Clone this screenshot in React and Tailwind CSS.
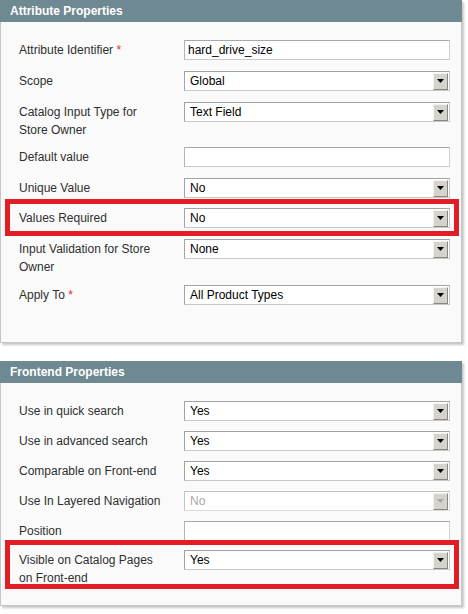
import React from "react";

function Arrow({ disabled }) {
  return (
    <div className="flex items-center justify-center w-[15px] h-[17px] mr-[1px] bg-[#d6d3cc] border border-t-[#f4f3ef] border-l-[#f4f3ef] border-r-[#8a8780] border-b-[#8a8780]">
      <svg width="7" height="4" viewBox="0 0 7 4">
        <path d="M0 0 H7 L3.5 4 Z" fill={disabled ? "#a8a8a8" : "#000"} />
      </svg>
    </div>
  );
}

function Select({ value, disabled }) {
  return (
    <div
      className={
        disabled
          ? "flex items-center w-[266px] h-[20px] bg-white border border-t-[#c4c4c4] border-l-[#c4c4c4] border-r-[#dcdcdc] border-b-[#dcdcdc]"
          : "flex items-center w-[266px] h-[20px] bg-white border border-t-[#a3a3a3] border-l-[#a3a3a3] border-r-[#c8c8c8] border-b-[#c8c8c8]"
      }
    >
      <div
        className={
          disabled
            ? "flex-1 pl-[5px] text-[12px] leading-[18px] text-[#a8a8a8]"
            : "flex-1 pl-[5px] text-[12px] leading-[18px] text-black"
        }
      >
        {value}
      </div>
      <Arrow disabled={disabled} />
    </div>
  );
}

function TextInput({ value }) {
  return (
    <div className="flex items-center w-[266px] h-[20px] bg-white border border-t-[#a8a8a8] border-l-[#b4b4b4] border-r-[#d0d0d0] border-b-[#c8c8c8] pl-[3px] text-[12px] leading-[18px] text-black">
      {value}
    </div>
  );
}

function Row({ lines, required, control, className }) {
  return (
    <div className={className}>
      <div className="flex items-start">
        <div className="w-[165px] shrink-0 pt-[1px] text-[12px] leading-[18px] text-[#2f2f2f]">
          {lines.map((l, i) => (
            <div key={i}>
              {l}
              {required && i === lines.length - 1 ? (
                <span className="text-[#e0312b]"> *</span>
              ) : null}
            </div>
          ))}
        </div>
        {control}
      </div>
    </div>
  );
}

function Panel({ title, children, bodyClass }) {
  return (
    <div className="w-[462px] shadow-[2px_2px_2px_rgba(0,0,0,0.22)]">
      <div className="h-[22px] bg-[#6f8992] pl-[10px] text-[12px] font-bold leading-[22px] text-white">
        {title}
      </div>
      <div className={bodyClass}>{children}</div>
    </div>
  );
}

const normal = "pl-[18px]";
const red =
  "ml-[4px] w-[454px] border-[5px] border-[#e31d25] pl-[9px] box-border";

export default function App() {
  return (
    <div className="w-[468px] h-[614px] bg-white font-['Liberation_Sans',Arial,sans-serif]">
      <Panel
        title="Attribute Properties"
        bodyClass="h-[321px] bg-[#fafafa] border-l border-r border-b border-[#c6c6c6] pt-[18px]"
      >
        <Row
          className={normal + " h-[31px]"}
          lines={["Attribute Identifier"]}
          required
          control={<TextInput value="hard_drive_size" />}
        />
        <Row
          className={normal + " h-[31px]"}
          lines={["Scope"]}
          control={<Select value="Global" />}
        />
        <Row
          className={normal + " h-[45px]"}
          lines={["Catalog Input Type for", "Store Owner"]}
          control={<Select value="Text Field" />}
        />
        <Row
          className={normal + " h-[31px]"}
          lines={["Default value"]}
          control={<TextInput value="" />}
        />
        <Row
          className={normal + " h-[21px]"}
          lines={["Unique Value"]}
          control={<Select value="No" />}
        />
        <Row
          className={red + " h-[37px] pt-[4px] mb-[3px]"}
          lines={["Values Required"]}
          control={<Select value="No" />}
        />
        <Row
          className={normal + " h-[46px]"}
          lines={["Input Validation for Store", "Owner"]}
          control={<Select value="None" />}
        />
        <Row
          className={normal + " h-[31px]"}
          lines={["Apply To"]}
          required
          control={<Select value="All Product Types" />}
        />
      </Panel>
      <div className="h-[18px]" />
      <Panel
        title="Frontend Properties"
        bodyClass="h-[223px] bg-[#fafafa] border-l border-r border-b border-[#c6c6c6] pt-[18px]"
      >
        <Row
          className={normal + " h-[30px]"}
          lines={["Use in quick search"]}
          control={<Select value="Yes" />}
        />
        <Row
          className={normal + " h-[30px]"}
          lines={["Use in advanced search"]}
          control={<Select value="Yes" />}
        />
        <Row
          className={normal + " h-[30px]"}
          lines={["Comparable on Front-end"]}
          control={<Select value="Yes" />}
        />
        <Row
          className={normal + " h-[30px]"}
          lines={["Use In Layered Navigation"]}
          control={<Select value="No" disabled />}
        />
        <Row
          className={normal + " h-[20px]"}
          lines={["Position"]}
          control={<TextInput value="" />}
        />
        <Row
          className={red + " h-[49px] pt-[5px] -mt-[1px] relative"}
          lines={["Visible on Catalog Pages", "on Front-end"]}
          control={<Select value="Yes" />}
        />
      </Panel>
    </div>
  );
}
